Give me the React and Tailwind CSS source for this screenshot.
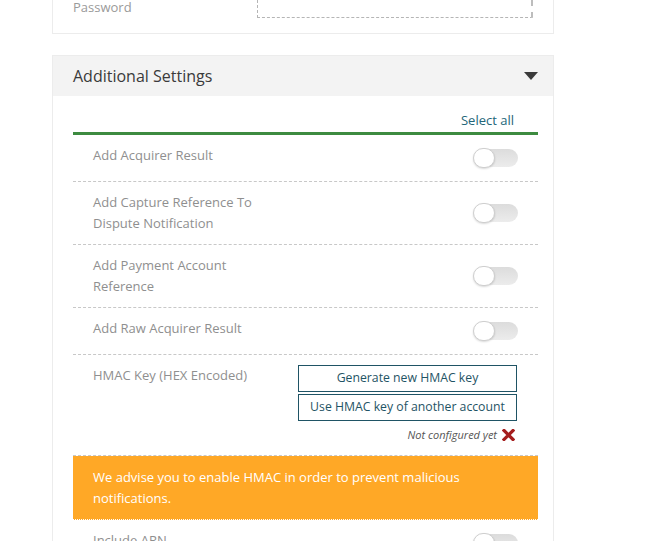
import React from "react";

const toggleRows = [
  "Add Acquirer Result",
  "Add Capture Reference To Dispute Notification",
  "Add Payment Account Reference",
  "Add Raw Acquirer Result",
];

const Toggle = () => (
  <div className="relative w-[44px] h-[18px] rounded-full bg-gradient-to-b from-[#dcdcdc] to-[#ececec] shrink-0">
    <div className="absolute -left-px -top-px w-[22px] h-[20px] rounded-full bg-white border border-[#cfcfcf] shadow-[0_1px_2px_rgba(0,0,0,0.15)]" />
  </div>
);

const ToggleRow = ({ label }) => (
  <div className="flex justify-between items-center min-h-[47px] py-[10px] pl-[20px] pr-[20px] border-b border-dashed border-[#c8c8c8]">
    <div className="self-start w-[185px] text-[13px] leading-[21px] text-[#8f8f8f]">{label}</div>
    <Toggle />
  </div>
);

const App = () => {
  return (
    <div className="min-h-screen w-[649px] bg-white pl-[52px] font-['Open_Sans',sans-serif]">
      {/* previous card, cut off at the top */}
      <div className="w-[502px] border border-t-0 border-[#ececec] pl-[20px] pb-[15px]">
        <div className="flex items-start">
          <div className="w-[184px] -mt-[2px] text-[13px] leading-[18px] text-[#9a9a9a]">Password</div>
          <div className="w-[276px] h-[18px] border-l border-b border-dashed border-l-[#b5b5b5] border-b-[#b5b5b5] border-r-2 border-r-[#bdbdbd]" />
        </div>
      </div>

      <div className="mt-[21px] w-[502px] border border-[#ececec]">
        <div className="h-[40px] bg-[#f3f3f3] flex items-center justify-between pl-[20px] pr-[15px]">
          <span className="text-[16px] text-[#3a3a3a]">Additional Settings</span>
          <span className="w-0 h-0 border-l-[7.5px] border-r-[7.5px] border-t-[8px] border-l-transparent border-r-transparent border-t-[#3a3a3a]" />
        </div>

        <div className="pl-[20px] pr-[15px] pt-[14px]">
          <div className="text-right pr-[24px] text-[13px] leading-[21px] text-[#236679]">Select all</div>
          <div className="mt-[1px] h-[3px] bg-[#3d8b40]" />

          {toggleRows.map((label) => (
            <ToggleRow key={label} label={label} />
          ))}

          <div className="flex pt-[10px] pb-[12px] pl-[20px] pr-[20px] border-b border-dashed border-[#c8c8c8]">
            <div className="w-[205px] text-[13px] leading-[21px] text-[#8f8f8f]">HMAC Key (HEX Encoded)</div>
            <div className="w-[219px] flex flex-col">
              <button className="h-[27px] border border-[#1f5465] text-[12.25px] text-[#1f5465] bg-white">
                Generate new HMAC key
              </button>
              <button className="mt-[2px] h-[27px] border border-[#1f5465] text-[12.25px] text-[#1f5465] bg-white">
                Use HMAC key of another account
              </button>
              <div className="mt-[6px] h-[16px] flex items-center justify-end gap-[5px] pr-[2px]">
                <span className="text-[11px] italic text-[#555]">Not configured yet</span>
                <svg width="13" height="12" viewBox="0 0 13 12">
                  <path d="M2 1.5 L11 10.5 M11 1.5 L2 10.5" stroke="#a51d1d" strokeWidth="3.2" strokeLinecap="square" />
                </svg>
              </div>
            </div>
          </div>

          <div className="bg-[#ffa826] px-[20px] pt-[11px] pb-[10px] border-b border-dotted border-white text-[13px] leading-[21px] text-white">
            We advise you to enable HMAC in order to prevent malicious notifications.
          </div>
          <ToggleRow label="Include ARN" />
        </div>
      </div>
    </div>
  );
};

export default App;
